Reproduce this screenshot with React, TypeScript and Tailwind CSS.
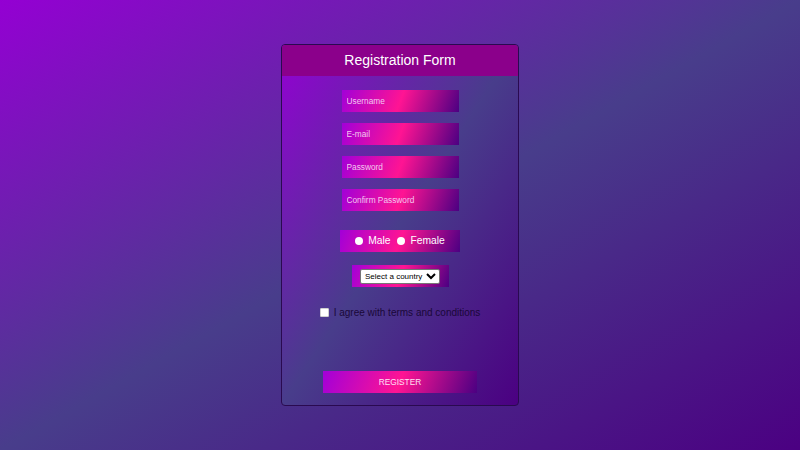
import { useState } from "react";

const fields = ["Username", "E-mail", "Password", "Confirm Password"];

const glow =
  "bg-[linear-gradient(110deg,#a200d8_0%,#ff1493_50%,#4b0082_100%)]";

export default function App() {
  const [gender, setGender] = useState("");
  const [agree, setAgree] = useState(false);

  return (
    <div className="h-[450px] w-full overflow-hidden bg-[linear-gradient(to_bottom_right,#9400d3,#483d8b,#4b0082)] font-['Liberation_Sans',Arial,sans-serif] flex justify-center pt-[44px]">
      <div className="w-[238px] h-[362px] rounded-[4px] border border-[#2a0a50] bg-[linear-gradient(to_bottom_right,#9400d3,#483d8b,#4b0082)] overflow-hidden flex flex-col items-center">
        <div className="w-full h-[31px] shrink-0 bg-[#8b008b] text-white text-[14px] flex items-center justify-center">
          Registration Form
        </div>

        <div className="mt-[14px] flex flex-col gap-[11px]">
          {fields.map((f) => (
            <input
              key={f}
              type={f.includes("Password") ? "password" : "text"}
              placeholder={f}
              className={`w-[117px] h-[22px] px-[5px] text-[8.3px] text-white outline-none placeholder:text-[#f4c8f0] ${glow}`}
            />
          ))}
        </div>

        <div className={`mt-[19px] w-[120px] h-[22px] flex items-center justify-center gap-[7px] text-[10.3px] text-white ${glow}`}>
          {["Male", "Female"].map((g) => (
            <label key={g} className="flex items-center gap-[5px] cursor-pointer">
              <input
                type="radio"
                name="gender"
                checked={gender === g}
                onChange={() => setGender(g)}
                className="appearance-none w-[8px] h-[8px] rounded-full bg-white checked:border-[2px] checked:border-[#8b008b]"
              />
              {g}
            </label>
          ))}
        </div>

        <div className={`mt-[13px] w-[97px] h-[22px] flex items-center justify-center ${glow}`}>
          <select className="h-[15px] bg-white text-black text-[8px] border border-[#767676] rounded-[2px]">
            <option>Select a country</option>
            <option>India</option>
            <option>United States</option>
            <option>United Kingdom</option>
          </select>
        </div>

        <label className="mt-[18px] flex items-center gap-[5px] text-[10px] text-[#1a0838] cursor-pointer">
          <input
            type="checkbox"
            checked={agree}
            onChange={(e) => setAgree(e.target.checked)}
            className="appearance-none w-[9px] h-[9px] bg-white border border-[#cfcfcf] rounded-[1px] checked:bg-[#8b008b]"
          />
          I agree with terms and conditions
        </label>

        <button
          type="button"
          className={`mt-[51px] w-[154px] h-[22px] text-[8.3px] text-[#ffe0f4] ${glow}`}
        >
          REGISTER
        </button>
      </div>
    </div>
  );
}
